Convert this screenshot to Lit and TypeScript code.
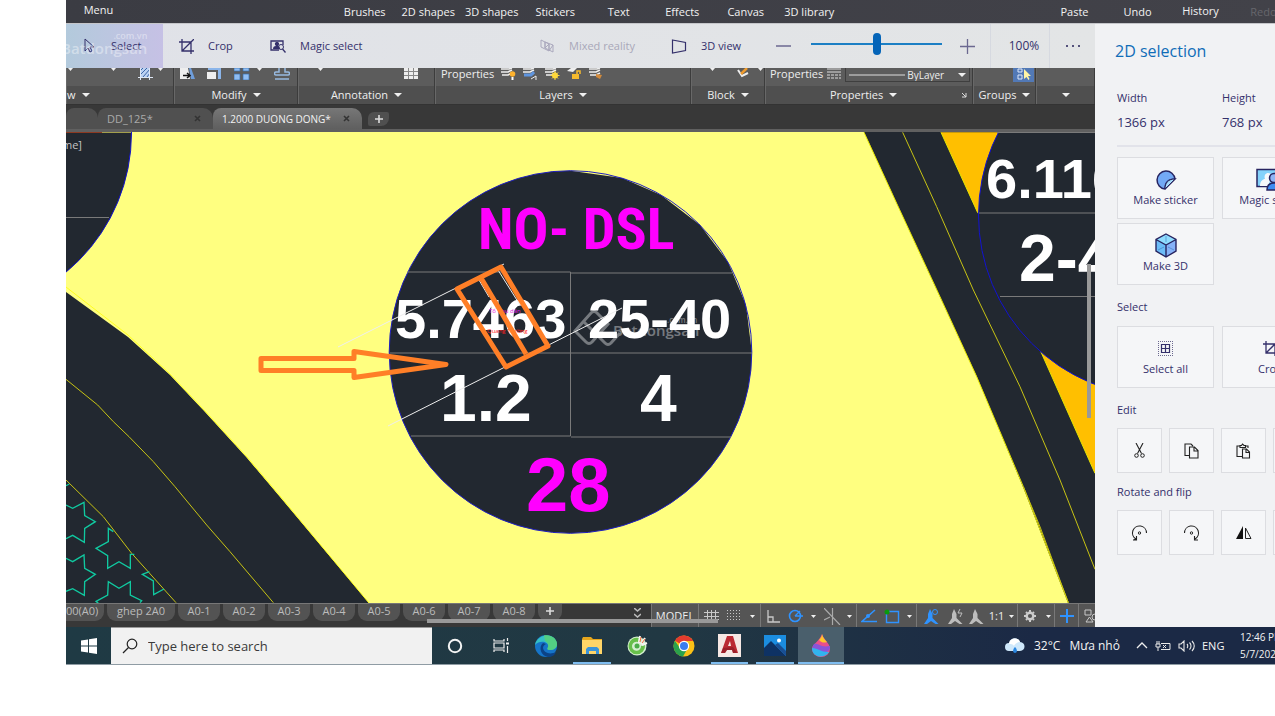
import { LitElement, html, css, svg } from "lit";
import { customElement } from "lit/decorators.js";

const icon = (w: number, h: number, body: unknown, box = `0 0 ${w} ${h}`) =>
  html`<svg class="icon" width=${w} height=${h} viewBox=${box} fill="none" aria-hidden="true">${body}</svg>`;

const caret = icon(8, 4, svg`<path d="M0 0h8L4 4z" fill="#f0f0f0"/>`);
const smallCaret = icon(5, 3, svg`<path d="M0 0h5L2.500 3z" fill="#f0f0f0"/>`);

/* Paint 3D glyphs */
const arrowIcon = icon(14, 16, svg`<path d="M2 1v12l3-3 2 4 2-1-2-4h4z" stroke="#34306b"/>`);
const cropIcon = icon(15, 15, svg`<path d="M0 3h12v12M3 0v12h12M3 12L15 0" stroke="#34306b" stroke-width="1.300"/>`);
const magicIcon = icon(16, 14, svg`<path d="M9 11H1V2h12v4" stroke="#34306b" stroke-width="1.300"/><path d="M3 10c0-2 1-3 3-3-2-2-1-4 1-4s3 2 1 4c1 0 2 1 2 3z" fill="#34306b"/><circle cx="11" cy="8" r="2.500" stroke="#34306b"/><path d="M12.500 10l3 3.500" stroke="#34306b" stroke-width="1.300"/>`);
const mixedIcon = icon(15, 14, svg`<path d="M1 1l8 4v7L1 8zM5 3l8 3v7L5 9zM5 3v6M9 5l-4 4M9 5v7l4-6" stroke="#aaa8bd"/>`);
const viewIcon = icon(16, 15, svg`<path d="M1.500 1l13 2.500v8l-13 2.500z" stroke="#34306b" stroke-width="1.200"/>`);

const stickerIcon = icon(22, 21, svg`<path d="M20 10A9 9 0 1 0 10 20z" fill="#73a9f5"/><path d="M20 10A9 9 0 1 0 10 20c0-6 3-10 10-10L10 20" stroke="#272460" stroke-width="1.500"/><path d="M20 10L10 20c0-6 3-10 10-10z" fill="#a6dcfb" stroke="#272460"/>`);
const cubeIcon = icon(24, 25, svg`<path d="M12 1l10 5.500L12 12 2 6.500z" fill="#8fdcff"/><path d="M2 6.500L12 12v12L2 18z" fill="#6cbcf8"/><path d="M22 6.500L12 12v12l10-6z" fill="#86b2f8"/><path d="M12 1l10 5.500V18l-10 6-10-6V6.500zM2 6.500L12 12l10-5.500M12 12v12" stroke="#272460" stroke-width="1.400"/><path d="M4 17l6-3M20 17l-6-3M12 3v6" stroke="#3d78bd" stroke-width=".6"/>`);
const magicBigIcon = icon(32, 24, svg`<path d="M2 1.500h28v17H2z" fill="#84d2fb" stroke="#272460" stroke-width="1.500"/><path d="M5 18c0-5 3-7 5-7-2-6 4-8 7-4l-4 11z" fill="#f6f8fb"/><circle cx="19" cy="10" r="4.500" fill="#8fb5f6" stroke="#272460" stroke-width="1.500"/><path d="M12 22c0-5 3-7 7-7s6 2 6 7z" fill="#3d8cf2" stroke="#272460" stroke-width="1.500"/>`);
const selectAllIcon = icon(15, 15, svg`<path d="M0 .5h15M0 14.500h15M.5 0v15M14.500 0v15" stroke="#6b688f" stroke-dasharray="1 1"/><path d="M3.500 3.500h8v8h-8zM7.500 3.500v8M3.500 7.500h8" stroke="#34306b" stroke-width="1.200"/>`);
const cutIcon = icon(11, 15, svg`<path d="M2 0l5.500 10.500M9 0L3.500 10.500" stroke="#222" stroke-width="1.100"/><circle cx="2.500" cy="12.500" r="1.800" stroke="#222"/><circle cx="8.500" cy="12.500" r="1.800" stroke="#222"/>`);
const copyIcon = icon(15, 16, svg`<path d="M5 12.500H1V1h6l2 2M5.500 4h5l3.500 3.500V15H5.500zM10 4v4h4" stroke="#222" stroke-width="1.100"/>`);
const pasteIcon = icon(15, 16, svg`<path d="M6 13.500H1V3h3M9 3h3v2M4 4.500V2.500h1.500L6.500 1l1.500 1.500h1.500v2zM6.500 6h4l3 3v6h-7zM10 6v3.500h3.500" stroke="#222" stroke-width="1.100"/>`);
const rotateLeft = icon(17, 16, svg`<path d="M15.500 8A7 7 0 1 0 5 14M5 14l-2.500 1M5.500 11v4H2" stroke="#222" stroke-width="1.100"/><circle cx="8.500" cy="8" r="1.200" stroke="#222"/>`);
const rotateRight = icon(17, 16, svg`<path d="M1.500 8A7 7 0 1 1 12 14M11.500 11v4H15" stroke="#222" stroke-width="1.100"/><circle cx="8.500" cy="8" r="1.200" stroke="#222"/>`);
const flipIcon = icon(16, 14, svg`<path d="M7 0v13H0z" fill="#111"/><path d="M9.500 2v10.500H15z" stroke="#222"/>`);

/* AutoCAD ribbon glyphs, cut at the top by the toolbar */
const hatch = icon(15, 12, svg`<path d="M3 0v9h9V0z" fill="#bcd2f2"/><path d="M3 6l6-6M5 9l7-8M3 2l2-2M9 9l3-4" stroke="#3c66a8"/><path d="M0 9.500h15M2.500 0v12M11.500 0v12" stroke="#dfe8f5"/>`);
const mirror = icon(15, 12, svg`<path d="M0 0h8l2 11H0z" fill="#eee"/><path d="M9 0h2l4 11h-4z" fill="#6f9edb"/><path d="M3 7.500h6M7 5l3 2.500L7 10" stroke="#111" stroke-width="1.500"/>`);
const scale = icon(15, 12, svg`<path d="M0 4h9v7H0z" fill="#eee"/><path d="M1 0h13v11h-3V2H1z" fill="#8bb5ea"/>`);
const arrayIcon = icon(16, 12, svg`<path d="M0 0h6v3H0zM9 0h6v3H9zM0 6h6v6H0zM9 6h6v6H9z" fill="#8fbdf3" stroke="#386fae" stroke-width=".7"/>`);
const offset = icon(16, 12, svg`<path d="M5 0v4H2c-2 0-2 3 0 3h12c2 0 2-3 0-3h-3V0M1 11h14" stroke="#97b9df" stroke-width="1.500"/>`);
const table = icon(14, 11, svg`<path d="M0 0h14v11H0z" fill="#eee"/><path d="M0 3.500h14M0 7.500h14M4.500 0v11M9.500 0v11" stroke="#888"/>`);
const layers = (mark: unknown) => icon(15, 12, svg`<path d="M0 1h8l3-1M0 4h7l4-2M1 7h6l4-2" stroke="#eee" stroke-width="1.600"/>${mark}`);
const layerIcons = [
  layers(svg`<circle cx="11.500" cy="6" r="2.800" fill="#ffb32e"/><path d="M11.500 9v3" stroke="#fff" stroke-width="2"/>`),
  layers(svg`<path d="M1 7h7l3-3" stroke="#5f95df" stroke-width="3"/><path d="M8 11l5-3M13 12V8" stroke="#eee"/>`),
  layers(svg`<circle cx="10" cy="7.500" r="3" fill="#ffd83a"/><path d="M10 3v9M5.500 7.500h9M7 4.500l6 6M13 4.500l-6 6" stroke="#ffd83a"/>`),
  icon(15, 12, svg`<path d="M0 3l4-3h6L6 4z" fill="#eee"/><path d="M5 6h7v5H5z" fill="#f6bb2d"/><path d="M10 6V3h3v3" stroke="#f6bb2d" stroke-width="1.500"/>`),
  layers(svg`<path d="M7 6l6 1-2 4-4-2z" fill="#d28a3c"/>`),
];
const editBlock = icon(13, 11, svg`<path d="M1 2l4 6 6-3" stroke="#eee" stroke-width="2"/><path d="M4 6l6-6" stroke="#ef9b2d" stroke-width="2.500"/>`);
const lines = icon(14, 11, svg`<path d="M0 1h14M0 4h14" stroke="#ddd"/><path d="M0 7h14M0 10h14" stroke="#ddd" stroke-dasharray="3 1"/>`);
const groupIcon = icon(21, 14, svg`<path d="M0 0h21v14H0z" fill="#5279b6"/><path d="M5 1h4v3H5zM5 7h4v4H5z" stroke="#dce8fb"/><path d="M11 1v10l2.500-2 2 3 1-1-1.500-3h3z" fill="#fff5a5"/>`);
const launcher = icon(6, 6, svg`<path d="M1 1l4 4M5 1v4H1" stroke="#ddd"/>`);

/* AutoCAD status bar glyphs */
const G = "#c9c9c9";
const B = "#2f93ff";
const gridGlyph = icon(15, 12, svg`<path d="M0 2.500h15M0 6.500h15M0 9.500h15M3.500 0v12M7.500 0v12M11.500 0v12" stroke=${G}/>`);
const dotGlyph = icon(14, 12, svg`<path d="M0 .5h14M0 3.500h14M0 6.500h14M0 9.500h14" stroke=${G} stroke-dasharray="1 2"/>`);
const orthoGlyph = icon(13, 13, svg`<path d="M1 0v12h12M1 7h5v5" stroke=${G} stroke-width="1.300"/>`);
const polarGlyph = icon(15, 14, svg`<circle cx="7" cy="7" r="5.500" stroke=${B} stroke-width="1.600"/><path d="M7 7h8M7 7l5-5" stroke=${B} stroke-width="1.300"/>`);
const isoGlyph = icon(17, 17, svg`<path d="M0 0l16 17M8.500 0v17M0 12l6-3" stroke="#aaa" stroke-width="1.200"/>`);
const angleGlyph = icon(16, 14, svg`<path d="M14 1L1 12.500h15" stroke=${B} stroke-width="1.600"/><circle cx="7" cy="7" r="2" fill=${B}/>`);
const osnapGlyph = icon(16, 15, svg`<path d="M2.500 2.500h12v11h-12z" stroke=${B} stroke-width="1.400"/><circle cx="3" cy="3" r="2.500" fill="#0b9a0b"/>`);
const figure = (c: string, mark: unknown) => icon(16, 15, svg`<path d="M7 0l2.500 5v4l6 6h-3L8 12l-4 3H1l4-6V5z" fill=${c}/>${mark}`);
const fig1 = figure(B, svg`<circle cx="12" cy="3" r="2.500" stroke=${B}/>`);
const fig2 = figure("#bdbdbd", svg`<path d="M13 0l-2 4h4l-2 4" stroke="#bdbdbd"/>`);
const fig3 = figure("#bdbdbd", svg``);
const gear = icon(12, 12, svg`<circle cx="6" cy="6" r="3.300" stroke="#ccc" stroke-width="2.400"/><path d="M6 0v2M6 10v2M0 6h2M10 6h2M2 2l1 1M9 9l1 1M10 2L9 3M3 9l-1 1" stroke="#ccc" stroke-width="2"/>`);
const plusGlyph = icon(14, 14, svg`<path d="M7 0v14M0 7h14" stroke=${B} stroke-width="2"/>`);
const shapesGlyph = icon(14, 15, svg`<path d="M1 1h6v5H1zM2 13l3.500-5L9 13z" stroke=${G}/><circle cx="11" cy="8" r="3" stroke=${G}/>`);

const statusCells: Array<[number, unknown, boolean]> = [
  [47, "MODEL", true],
  [24, gridGlyph, false], [21, dotGlyph, false], [17, smallCaret, true],
  [24, orthoGlyph, false], [20, polarGlyph, false], [16, smallCaret, false], [22, isoGlyph, false], [14, smallCaret, true],
  [24, angleGlyph, false], [22, osnapGlyph, false], [14, smallCaret, true],
  [28, fig1, false], [19, fig2, false], [23, fig3, false], [19, "1:1", false], [12, smallCaret, true],
  [24, gear, false], [13, smallCaret, true],
  [24, plusGlyph, true],
  [24, shapesGlyph, false],
];

/* Taskbar glyphs */
const winLogo = icon(16, 16, svg`<path d="M0 2.500l7-1V7.500H0zM8 1.300L16 0v7.500H8zM0 8.500h7v6l-7-1zM8 8.500h8V16l-8-1.300z" fill="#fff"/>`);
const searchIcon = icon(16, 16, svg`<circle cx="10" cy="6" r="4.800" stroke="#222" stroke-width="1.200"/><path d="M6.500 9.500L1 15" stroke="#222" stroke-width="1.300"/>`);
const taskIcons: Array<[string, unknown, string]> = [
  ["Cortana", icon(16, 16, svg`<circle cx="8" cy="8" r="6.200" stroke="#f4f4f4" stroke-width="2"/>`), ""],
  ["Task View", icon(16, 15, svg`<path d="M1 1v2h10V1M1 14v-2h10v2M1 5h10v5H1zM14.500 0v3M14.500 8v7" stroke="#eee" stroke-width="1.200"/><path d="M13 4.500h3v2h-3z" fill="#eee"/>`), ""],
  ["Microsoft Edge", icon(24, 24, svg`<circle cx="12" cy="12" r="11" fill="#1675c9"/><path d="M1 11C3-1 22-2 23 10c0 4-3 6-7 6-3 0-3-1-2-3 2-5-8-8-13-2z" fill="#35c1c5"/><path d="M10 1c8-1 14 5 13 10-1 4-4 5-7 5-3 0-3-1-2-3 1-4-3-6-3-6z" fill="#5ed36c" opacity=".75"/><path d="M9 9c-5 4-2 13 5 14 4 0 7-2 8-5-6 3-12 1-13-4 0-2 1-3 3-4z" fill="#0c4387"/>`), ""],
  ["File Explorer", icon(22, 18, svg`<path d="M1 2l1-2h8l2 2h9v15H1z" fill="#e5a61d"/><path d="M1 3h20v14H1z" fill="#ffd568"/><path d="M5 17v-5l2-2h9l2 2v5h-3v-3H8v3z" fill="#3b94d9"/>`), "open"],
  ["Cốc Cốc", icon(21, 21, svg`<circle cx="10" cy="11" r="9.500" fill="#d5efd0"/><path d="M12 3a8.300 8.300 0 1 0 6 7l-4 1a4.500 4.500 0 1 1-3-4z" fill="#67bf4a"/><circle cx="10" cy="11" r="2.500" fill="#4bad48"/><path d="M12 8l1-7M14 9l4-6M15 10l5-2" stroke="#f4f4f0" stroke-width="2"/><path d="M13 7l1-5M15 8l3-4" stroke="#ef6a3a"/>`), ""],
  ["Google Chrome", icon(22, 22, svg`<circle cx="11" cy="11" r="10.500" fill="#fbc116"/><path d="M11 11L1.900 5.700A10.500 10.500 0 0 1 20.200 6H11z" fill="#e33b2e"/><path d="M1.900 5.700A10.500 10.500 0 0 0 10 21.500l4.500-8L11 11 7 13z" fill="#2ba24c"/><circle cx="11" cy="11" r="5.200" fill="#fff"/><circle cx="11" cy="11" r="4" fill="#3b7ded"/>`), ""],
  ["AutoCAD", icon(23, 23, svg`<path d="M0 0h23v23H0z" fill="#f6e8e4"/><path d="M9 2h6l5 17h-5l-1-3H9l-2 3H3zM12 7l-2 5h3z" fill="#bb2a33" fill-rule="evenodd"/><path d="M5 14l10-1 4 6h-4l-1-3H9l-2 3H3z" fill="#7d1420" opacity=".5"/>`), "open"],
  ["Photos", icon(22, 21, svg`<path d="M0 0h22v21H0z" fill="#1b8de0"/><path d="M0 13l7-7 15 15H0z" fill="#0e3264"/><path d="M11 10l3-2 8 8v5z" fill="#1a4f93"/><circle cx="15" cy="5.500" r="2" fill="#fff"/>`), "open"],
  ["Paint 3D", icon(18, 23, svg`<path d="M10 0c1 5 8 9 8 15a9 8 0 0 1-18 0C0 10 7 8 10 0z" fill="#e84f8c"/><path d="M10 0c1 4 3 6 5 8-3 1-5 1-8-2 2-2 3-4 3-6z" fill="#ffc629"/><path d="M2 10c5-1 6 4 16 2 1 9-13 7-17 5-1-2-1-4 1-7z" fill="#8a54d8"/><path d="M0 14c6 0 8 4 17 4-4 7-17 6-17-4z" fill="#31b4ee"/>`), "open current"],
];
const cloud = icon(20, 16, svg`<path d="M4 13a4 4 0 0 1 0-8c1-6 10-6 11-1 6 0 6 9 0 9z" fill="#cfe8fb"/><path d="M4 6c1-7 10-7 11-2-3 0-5 2-6 4-1-2-3-2-5-2z" fill="#fff"/><path d="M10 9c3 3 2 6 0 6s-3-3 0-6z" fill="#2b86df"/>`);
const battery = icon(16, 12, svg`<path d="M6 3.500h9v6H6M2 1v3M4 1v3M1 4h4v3H1zM3 7v4M8 5l3 3M11 5L8 8" stroke="#e8e8e8"/>`);
const speaker = icon(17, 12, svg`<path d="M1 4h2l3-3v10L3 8H1zM9 4c1 1 1 3 0 4M11.500 2.500c2 2 2 5 0 7M14 1c3 3 3 7 0 10" stroke="#e8e8e8" stroke-width="1.100"/>`);

const drawing = svg`
  <rect x="66" y="132" width="1029" height="471" fill="#222830"/>
  <path d="M66 132H864L897 204 940 297 977 377 1023 487 1068 603H369L280 497 247 458 205 412 170 375 128 337 66 292z" fill="#ffff80"/>
  <path d="M66 287L128 335 170 374 205 411 247 457 280 496 369 603" class="y1"/>
  <circle cx="-49" cy="133" r="180.500" class="disc"/>
  <g transform="translate(60 130) scale(.33333)">
    <path d="M18 748L113 825 160 875 207 920 280 995 345 1070 440 1185 510 1265 640 1418M18 1050L130 1160 215 1270 348 1418" class="olive"/>
    <path d="M18 1125l20 10 34-18 2 40 32 18-32 20-1 42-35-21-20 10M160 1205l-15-10v40l-37 20 35 22v38l34-20 34 20v-42h12M18 1285l20 10 34-20 2 40 32 18-32 22-1 41-35-20-20 8M268 1325l-21 8 33 20 1 41 31-17M115 1420l-7-6 35-19 2-40 32 20 34-20v40l34 17-5 6M18 1067l10-5" class="teal"/>
  </g>
  <path d="M66 217.500h43" class="rule"/>
  <path d="M66 132.500h36" stroke="#8d3a22"/><path d="M102 132.500h29" stroke="#a39f4c"/>
  <text x="62" y="149" class="note">me]</text>
  <g transform="translate(860 130) scale(.33333)">
    <path d="M243 7H705V1030L538 655z" fill="#ffbf00"/>
    <path d="M12 7L110 220 240 500 350 740 490 1070 625 1418M243 7L353 248M538 655L705 1030" class="bright"/>
    <path d="M128 7L230 230 340 480 480 770 600 1050 705 1318M490 1070l50 120 85 228" class="olive"/>
  </g>
  <circle cx="1160" cy="215" r="181.500" class="disc"/>
  <path d="M997 132.500h98M979 213h116M1000 296.500h95" class="rule"/>
  <g class="figures">
    <text x="986" y="198">6.116</text>
    <text x="1019" y="281" class="large">2-4</text>
  </g>

  <path d="M570.500 170.700L622 178 661 195 700 225 728 262 746 305 751.800 352A181.300 181.300 0 1 1 570.500 170.700z" fill="#222830"/>
  <circle cx="570.500" cy="352" r="181.300" class="rim"/>
  <path d="M407 272h163.500v164H411M571 273h161M390 353h362M571 437h160" class="rule"/>
  <text x="478" y="249" class="plot">NO- DSL</text>
  <text x="526" y="511" class="lot">28</text>
  <g class="figures">
    <text x="395" y="338">5.7463</text>
    <text x="588" y="338">25-40</text>
    <text x="440" y="421" class="large">1.2</text>
    <text x="640" y="421" class="large">4</text>
  </g>
  <g opacity=".38">
    <path d="M575 331l16-18c2-2 4-2 6 0l11 11-16 18c-2 2-4 2-6 0zM583 321l22 22c2 2 4 2 6 0l9-10" class="mark"/>
    <text x="613" y="336" class="brand">Batdongsan</text><text x="667" y="323" class="brandtop">.com.vn</text>
  </g>
  <path d="M338 347L504 264M388 426L505 367 622 308M479 280l10 17M498 270l22 35" class="thin"/>
  <text x="489" y="313" class="tiny">Tổ Khu dân</text>
  <text x="487" y="333" class="tiny red">Quang Trường</text>
  <path d="M457 289L501 267 548 346 506 367zM481 278L526 354" class="marker"/>
  <path d="M261 358.500H354V351.500L446 364.500 354 377.500V370.500H261z" class="marker arrow"/>`;

@customElement("app-root")
export class AppRoot extends LitElement {
  static styles = css`
    :host { display: block; background: #fff; padding-left: 66px; overflow: hidden; font-family: "Open Sans", "Noto Sans", sans-serif; font-size: 11px; line-height: 16px; color: #34306b; }
    * { box-sizing: border-box; }
    button, select, input { font: inherit; color: inherit; margin: 0; padding: 0; border: 0; background: none; border-radius: 0; white-space: nowrap; }
    .icon { display: block; flex: none; }

    .topbar { display: flex; height: 23px; background: linear-gradient(90deg, #3b3c43, #424249); color: #f2f2f2; overflow: hidden; }
    .menu { width: 65px; height: 20px; }
    .tools { display: grid; grid-template-columns: repeat(8, 1fr); width: 508px; margin-left: 202px; }
    .tools button, .edits button { height: 23px; padding-top: 1px; }
    .spring { flex: 1; }
    .edits { display: grid; grid-template-columns: repeat(4, 63px); width: 232px; flex: none; }
    .edits .history { height: 20px; }
    .edits .off { color: #66666c; }

    .body { display: flex; height: 604px; border-top: 1px solid #c5c6ca; }
    .work { flex: 1; min-width: 0; display: flex; flex-direction: column; position: relative; }
    .toolbar { display: flex; height: 44px; background: linear-gradient(90deg, #e0e2e8, #e3e5e6); flex: none; }
    .toolbar button { display: flex; align-items: center; gap: 14px; padding-left: 16px; flex: none; }
    .select { width: 97px; background: linear-gradient(90deg, #b3cadc, #c6c1e5); position: relative; overflow: hidden; }
    .stamp { position: absolute; left: -5px; top: 8px; color: #ffffff66; font-size: 15px; line-height: 16px; font-weight: 600; display: flex; flex-direction: column; align-items: flex-end; }
    .stamp small { font-size: 9px; line-height: 8px; }
    .toolbar .select { padding-left: 17px; }
    .crop { width: 91px; }
    .magic { width: 120px; }
    .mixed { width: 131px; color: #a9a8b9; }
    .view { width: 106px; }
    .toolbar .step { padding: 0 0 0 15px; width: 50px; }
    .toolbar .more { width: 46px; justify-content: center; padding: 0; border-left: 1px solid #d6d9e0; }
    .percent { width: 59px; display: flex; align-items: center; justify-content: center; padding-left: 8px; border-left: 1px solid #d6d9e0; font-size: 12px; }
    .toolbar .plus { width: 48px; padding-left: 18px; }
    .slider { -webkit-appearance: none; appearance: none; width: 131px; height: 22px; margin: 9px 0 0 0; flex: none; }
    .slider::-webkit-slider-runnable-track { height: 2px; background: #1c7fc4; }
    .slider::-webkit-slider-thumb { -webkit-appearance: none; width: 8px; height: 22px; margin-top: -10px; border-radius: 4px; background: #0464b8; }

    .ribbon { display: grid; grid-template-columns: 108px 124px 137px 256px 74px 208px 63px 1fr; height: 37px; background: #5c5c5c; border-bottom: 1px solid #333; color: #eee; flex: none; overflow: hidden; }
    .group { border-right: 1px solid #3c3c3c; border-left: 1px solid #686868; display: flex; flex-direction: column; min-width: 0; }
    .row { display: flex; height: 18px; align-items: flex-start; }
    .row .word { line-height: 12px; }
    .caption { flex: 1; background: #4f4f4f; display: flex; align-items: center; justify-content: center; gap: 6px; }
    .caption.left { justify-content: flex-start; }
    .caption.launch { justify-content: flex-start; padding: 0 5px 0 64px; }
    .caption.launch .icon:last-child { margin-left: auto; }
    .first { display: grid; grid-template-columns: 43px 27px 20px 1fr; padding-left: 1px; }
    .modify { padding-left: 5px; gap: 12px; }
    .modify .tight { display: flex; gap: 7px; }
    .annot { padding-left: 19px; gap: 81px; }
    .layer { padding-left: 5px; gap: 7px; }
    .block { padding-left: 18px; gap: 22px; }
    .block .tight { display: flex; gap: 8px; }
    .props { padding-left: 4px; gap: 4px; }
    .line { width: 125px; height: 14px; border: 1px solid #3f3f3f; border-top: 0; display: flex; align-items: center; padding: 0 3px; gap: 2px; }
    .line select { appearance: none; -webkit-appearance: none; flex: 1; line-height: 12px; height: 14px; font-size: 10px; }
    .grp { padding-left: 39px; }

    .files { display: flex; height: 24px; background: #383838; padding-top: 3px; color: #f2f2f2; flex: none; }
    .file { display: flex; align-items: center; justify-content: space-between; background: #505050; border-radius: 8px 10px 0 0; padding: 0 12px 0 9px; }
    .stub { width: 32px; }
    .dd { width: 115px; color: #aaa; }
    .active { width: 149px; background: linear-gradient(#777, #5f5f5f); font-size: 10px; }
    .add { width: 21px; height: 14px; margin: 4px 0 0 6px; background: #505050; border-radius: 6px 2px 8px 2px; display: grid; place-items: center; }
    .seam { height: 3px; background: #606060; flex: none; }
    .canvas { display: block; width: 100%; height: 471px; flex: none; }
    .y1 { fill: none; stroke: #ffff20; }
    .bright { fill: none; stroke: #e6e600; stroke-width: 3; }
    .olive { fill: none; stroke: #c8c414; stroke-width: 3; }
    .teal { fill: none; stroke: #10c9a0; stroke-width: 4; }
    .disc { fill: #222830; stroke: #1212cf; stroke-width: 1; }
    .rim { fill: none; stroke: #1f1fc0; stroke-width: 1; }
    .rule { fill: none; stroke: #7a7a7a; stroke-width: 1; }
    .thin { fill: none; stroke: #eee; stroke-width: 1; }
    .marker { fill: none; stroke: #ff7f27; stroke-width: 5; stroke-linejoin: round; }
    .mark { fill: none; stroke: #fff; stroke-width: 3; }
    .note { font-size: 11px; fill: #c4c4c4; }
    .figures { font-family: "Liberation Sans", sans-serif; font-size: 56px; font-weight: 700; fill: #fff; }
    .large { font-size: 66px; }
    .plot { font-family: "Roboto Condensed", "Liberation Sans", sans-serif; font-size: 58px; font-weight: 700; fill: #f0f; }
    .lot { font-family: "Liberation Sans", sans-serif; font-size: 76px; font-weight: 700; fill: #f0f; }
    .brand { font-size: 15px; font-weight: 600; fill: #fff; }
    .brandtop { font-size: 8px; font-weight: 600; fill: #fff; }
    .tiny { font-size: 6px; fill: #e020e0; }
    .red { fill: #ff2020; }
    .vbar { position: absolute; right: 4px; top: 240px; width: 4px; height: 154px; background: #999; }
    .hbar { position: absolute; left: 361px; bottom: 4px; width: 291px; height: 4px; background: #999; }

    .bottom { display: flex; height: 24px; background: #383838; border-top: 1px solid #777; color: #bbb; flex: none; overflow: hidden; }
    .sheets { display: flex; gap: 3px; height: 17px; }
    .sheets button { width: 42px; background: #535353; border-radius: 0 0 9px 9px; padding-bottom: 3px; line-height: 14px; }
    .sheets .part { width: 38px; text-align: left; border-radius: 0 0 9px 0; }
    .sheets .long { width: 68px; }
    .sheets .new { width: 24px; color: #ddd; display: grid; place-items: center; }
    .chev { width: 27px; display: grid; place-items: center; height: 17px; }
    .status { display: flex; width: 444px; background: #555; border-left: 1px solid #777; overflow: hidden; color: #eee; }
    .status button { display: flex; align-items: center; justify-content: center; flex: none; height: 23px; padding-top: 1px; }
    .status .cut { border-right: 1px solid #787878; }

    .panel { width: 180px; flex: none; background: #f1f2f4; padding: 17px 0 0 22px; overflow: hidden; }
    h1 { font-size: 16px; line-height: 20px; font-weight: 400; color: #0f6db8; margin: 0 0 0 -2px; }
    h2 { font-size: 11px; line-height: 16px; font-weight: 400; margin: 0; }
    .dims { display: grid; grid-template-columns: 97px 97px; column-gap: 8px; margin: 29px 0 0; padding-bottom: 14px; border-bottom: 2px solid #e2e3ea; width: 220px; }
    .dims div { display: flex; flex-direction: column; gap: 7px; }
    dt { line-height: 16px; } dd { margin: 0; font-size: 13px; line-height: 18px; }
    .cards { display: grid; grid-template-columns: 97px 97px; gap: 4px 8px; margin: 10px 0 14px; }
    .cards.two { margin: 11px 0 14px; }
    .cards button { height: 62px; background: #f5f6f8; border: 1px solid #dcdde1; display: grid; grid-template-rows: 24px 16px; place-items: center; align-content: center; padding-bottom: 1px; }
    .tiles { display: grid; grid-template-columns: repeat(4, 45px); gap: 7px; margin: 10px 0 11px; }
    .tiles button { height: 45px; background: #f5f6f8; border: 1px solid #dcdde1; display: grid; place-items: center; }

    .taskbar { display: flex; height: 38px; background: linear-gradient(90deg, #1f3a44 0, #213843 50%, #1b2945 80%, #1b2945); border-bottom: 1px solid #8f9ca4; color: #f4f4f4; overflow: hidden; }
    .start { width: 45px; display: grid; place-items: center; flex: none; }
    .search { width: 321px; background: #f1f1f1; display: flex; align-items: center; gap: 10px; padding-left: 11px; color: #333; flex: none; border-top: 1px solid #999; }
    .search input { width: 260px; font-size: 13px; outline: 0; }
    .search input::placeholder { color: #3a3a3a; opacity: 1; }
    .apps { display: grid; grid-template-columns: repeat(9, 1fr); width: 412px; flex: none; }
    .apps button { display: grid; place-items: center; border-bottom: 2px solid transparent; margin: 0 4px; padding-top: 2px; }
    .apps .open { border-bottom-color: #7fbdf0; }
    .apps .current { background: #4a5f6c; margin: 0; }
    .weather { display: flex; align-items: center; gap: 9px; font-size: 12px; width: 131px; white-space: nowrap; padding-top: 1px; }
    .tray { display: flex; align-items: center; gap: 7px; width: 104px; }
    .clock { width: 35px; font-size: 10px; line-height: 17px; white-space: nowrap; padding: 2px 0; overflow: hidden; flex: none; }
  `;

  private group(title: string, cls: string, row: unknown, tail: unknown = "", cap = "") {
    return html`<div class="group"><div class="row ${cls}">${row}</div><div class="caption ${cap}">${title}${caret}${tail}</div></div>`;
  }

  private card(glyph: unknown, label: string) {
    return html`<button>${glyph}<span>${label}</span></button>`;
  }

  private tile(glyph: unknown, label: string) {
    return html`<button aria-label=${label}>${glyph}</button>`;
  }

  render() {
    const close = icon(7, 7, svg`<path d="M1 1l5 5M6 1L1 6" stroke="#333" stroke-width="1.600"/>`);
    const plus = icon(8, 8, svg`<path d="M4 0v8M0 4h8" stroke="#ddd" stroke-width="1.600"/>`);
    return html`
      <header class="topbar">
        <button class="menu">Menu</button>
        <nav class="tools">
          ${["Brushes", "2D shapes", "3D shapes", "Stickers", "Text", "Effects", "Canvas", "3D library"].map((t) => html`<button>${t}</button>`)}
        </nav>
        <span class="spring"></span>
        <div class="edits"><button>Paste</button><button>Undo</button><button class="history">History</button><button class="off">Redo</button></div>
      </header>

      <div class="body">
        <main class="work">
          <div class="toolbar">
            <button class="select"><span class="stamp"><small>.com.vn</small>Batdongsan</span>${arrowIcon}<span>Select</span></button>
            <button class="crop">${cropIcon}<span>Crop</span></button>
            <button class="magic">${magicIcon}<span>Magic select</span></button>
            <span class="spring"></span>
            <button class="mixed">${mixedIcon}<span>Mixed reality</span></button>
            <button class="view">${viewIcon}<span>3D view</span></button>
            <button class="step" aria-label="Zoom out">${icon(15, 2, svg`<path d="M0 1h15" stroke="#6b6890" stroke-width="1.500"/>`)}</button>
            <input class="slider" type="range" value="50" aria-label="Zoom" />
            <button class="plus" aria-label="Zoom in">${icon(15, 15, svg`<path d="M0 7.500h15M7.500 0v15" stroke="#6b6890" stroke-width="1.300"/>`)}</button>
            <span class="percent">100%</span>
            <button class="more" aria-label="More">${icon(14, 2, svg`<path d="M0 0h2v2H0zM6 0h2v2H6zM12 0h2v2h-2z" fill="#55527c"/>`)}</button>
          </div>

          <div class="ribbon">
            ${this.group("w", "first", html`${smallCaret}${smallCaret}${hatch}${smallCaret}`, "", "left")}
            ${this.group("Modify", "modify", html`${mirror}${scale}<span class="tight">${arrayIcon}${smallCaret}</span>${offset}`)}
            ${this.group("Annotation", "annot", html`${smallCaret}${table}`)}
            ${this.group("Layers", "layer", html`<span class="word">Properties</span>${layerIcons}`)}
            ${this.group("Block", "block", html`${smallCaret}<span class="tight">${editBlock}${smallCaret}</span>`)}
            ${this.group("Properties", "props", html`<span class="word">Properties</span>${lines}
              <label class="line">${icon(56, 2, svg`<path d="M0 1h56" stroke="#ddd"/>`)}<select aria-label="Linetype"><option>ByLayer</option></select>${caret}</label>`, launcher, "launch")}
            ${this.group("Groups", "grp", groupIcon)}
            ${this.group("", "", "")}
          </div>

          <div class="files">
            <button class="file stub" aria-label="Drawing"></button>
            <button class="file dd"><span>DD_125*</span>${close}</button>
            <button class="file active"><span>1.2000 DUONG DONG*</span>${close}</button>
            <button class="add" aria-label="New drawing">${plus}</button>
          </div>
          <div class="seam"></div>
          <svg class="canvas" viewBox="66 132 1029 471" preserveAspectRatio="xMidYMid slice">${drawing}</svg>

          <div class="bottom">
            <nav class="sheets">
              <button class="part">00(A0)</button><button class="long">ghep 2A0</button>
              ${[1, 2, 3, 4, 5, 6, 7, 8].map((n) => html`<button>A0-${n}</button>`)}
              <button class="new" aria-label="New layout">${plus}</button>
            </nav>
            <span class="spring"></span>
            <span class="chev">${icon(7, 10, svg`<path d="M0 0l3.500 3L7 0M0 6l3.500 3L7 6" stroke="#bbb" stroke-width="1.600"/>`)}</span>
            <div class="status">
              ${statusCells.map(([w, body, cut]) => html`<button class=${cut ? "cut" : ""} style="width:${w}px">${body}</button>`)}
            </div>
          </div>
          <div class="vbar"></div>
          <div class="hbar"></div>
        </main>

        <aside class="panel">
          <h1>2D selection</h1>
          <dl class="dims"><div><dt>Width</dt><dd>1366 px</dd></div><div><dt>Height</dt><dd>768 px</dd></div></dl>
          <div class="cards">${this.card(stickerIcon, "Make sticker")}${this.card(magicBigIcon, "Magic select")}${this.card(cubeIcon, "Make 3D")}</div>
          <h2>Select</h2>
          <div class="cards two">${this.card(selectAllIcon, "Select all")}${this.card(cropIcon, "Crop")}</div>
          <h2>Edit</h2>
          <div class="tiles">${this.tile(cutIcon, "Cut")}${this.tile(copyIcon, "Copy")}${this.tile(pasteIcon, "Paste")}${this.tile("", "Delete")}</div>
          <h2>Rotate and flip</h2>
          <div class="tiles">${this.tile(rotateLeft, "Rotate left")}${this.tile(rotateRight, "Rotate right")}${this.tile(flipIcon, "Flip horizontal")}${this.tile("", "Flip vertical")}</div>
        </aside>
      </div>

      <footer class="taskbar">
        <button class="start" aria-label="Start">${winLogo}</button>
        <label class="search">${searchIcon}<input type="text" placeholder="Type here to search" aria-label="Type here to search" /></label>
        <div class="apps">${taskIcons.map(([name, glyph, cls]) => html`<button class=${cls} aria-label=${name}>${glyph}</button>`)}</div>
        <span class="spring"></span>
        <div class="weather">${cloud}<span>32°C</span><span>Mưa nhỏ</span></div>
        <div class="tray">${icon(12, 7, svg`<path d="M1 6l5-5 5 5" stroke="#eee" stroke-width="1.300"/>`)}${battery}${speaker}<span>ENG</span></div>
        <div class="clock">12:46 PM<br />5/7/2022</div>
      </footer>
    `;
  }
}
